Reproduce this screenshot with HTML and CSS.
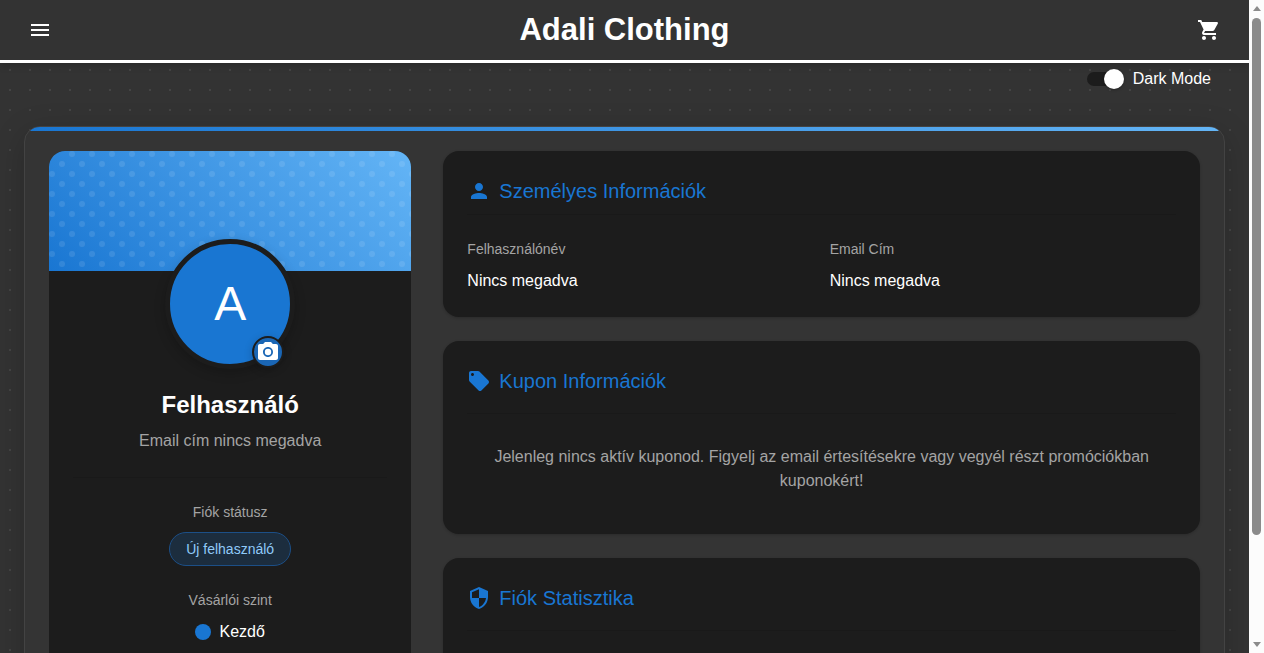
FILE: index.html
```html
<!DOCTYPE html>
<html lang="hu">
<head>
<meta charset="utf-8">
<meta name="viewport" content="width=device-width, initial-scale=1">
<title>Adali Clothing</title>
<link rel="stylesheet" href="styles.css">
</head>
<body>
<div class="viewport">
  <div class="page">
    <header class="header">
      <button class="icon-button" type="button" aria-label="Menü">
        <svg class="icon" viewBox="0 0 24 24"><path d="M3 18h18v-2H3v2zm0-5h18v-2H3v2zm0-7v2h18V6H3z"/></svg>
      </button>
      <h1 class="brand">Adali Clothing</h1>
      <button class="icon-button" type="button" aria-label="Kosár">
        <svg class="icon" viewBox="0 0 24 24"><path d="M15.55 13c.75 0 1.41-.41 1.75-1.03l3.58-6.49c.37-.66-.11-1.48-.87-1.48H5.21l-.94-2H1v2h2l3.6 7.59-1.35 2.44C4.52 15.37 5.48 17 7 17h12v-2H7l1.1-2h7.45zM7 18c-1.1 0-1.99.9-1.99 2S5.9 22 7 22s2-.9 2-2-.9-2-2-2zm10 0c-1.1 0-1.99.9-1.99 2s.89 2 1.99 2 2-.9 2-2-.9-2-2-2z"/></svg>
      </button>
    </header>

    <div class="mode-row">
      <label class="mode"><input class="switch" type="checkbox" role="switch" checked>Dark Mode</label>
    </div>

    <main class="panel">
      <aside class="profile">
        <div class="banner">
          <svg class="banner-dots" aria-hidden="true">
            <defs><pattern id="dots" width="20" height="20" patternUnits="userSpaceOnUse"><circle cx="3" cy="3" r="3"/><circle cx="13" cy="13" r="3"/></pattern></defs>
            <rect width="100%" height="100%" fill="url(#dots)"/>
          </svg>
        </div>
        <div class="avatar">A
          <button class="avatar-edit" type="button" aria-label="Kép módosítása">
            <svg class="icon" viewBox="0 0 24 24"><circle cx="12" cy="12" r="3.2"/><path d="M9 2 7.17 4H4c-1.1 0-2 .9-2 2v12c0 1.100.9 2 2 2h16c1.100 0 2-.9 2-2V6c0-1.100-.9-2-2-2h-3.170L15 2H9zm3 15c-2.760 0-5-2.240-5-5s2.240-5 5-5 5 2.240 5 5-2.240 5-5 5z"/></svg>
          </button>
        </div>
        <h2 class="name">Felhasználó</h2>
        <p class="email">Email cím nincs megadva</p>
        <div class="facts">
          <div class="fact">
            <span class="label">Fiók státusz</span>
            <span class="chip">Új felhasználó</span>
          </div>
          <div class="fact">
            <span class="label">Vásárlói szint</span>
            <span class="level">Kezdő</span>
          </div>
        </div>
      </aside>

      <div class="sections">
        <section class="card">
          <h2 class="card-title card-title-compact"><svg class="icon" viewBox="0 0 24 24"><path d="M12 12c2.210 0 4-1.790 4-4s-1.790-4-4-4-4 1.790-4 4 1.790 4 4 4zm0 2c-2.670 0-8 1.340-8 4v2h16v-2c0-2.660-5.330-4-8-4z"/></svg>Személyes Információk</h2>
          <dl class="fields">
            <div class="field"><dt class="label">Felhasználónév</dt><dd class="value">Nincs megadva</dd></div>
            <div class="field"><dt class="label">Email Cím</dt><dd class="value">Nincs megadva</dd></div>
          </dl>
        </section>
        <section class="card">
          <h2 class="card-title"><svg class="icon" viewBox="0 0 24 24"><path d="m21.410 11.580-9-9C12.050 2.220 11.550 2 11 2H4c-1.100 0-2 .9-2 2v7c0 .55.220 1.050.590 1.420l9 9c.360.360.860.580 1.410.580s1.050-.220 1.410-.590l7-7c.370-.360.590-.860.590-1.410s-.230-1.060-.590-1.420zM5.500 7C4.670 7 4 6.330 4 5.500S4.670 4 5.500 4 7 4.670 7 5.500 6.330 7 5.500 7z"/></svg>Kupon Információk</h2>
          <p class="empty">Jelenleg nincs aktív kuponod. Figyelj az email értesítésekre vagy vegyél részt promóciókban kuponokért!</p>
        </section>
        <section class="card">
          <h2 class="card-title"><svg class="icon" viewBox="0 0 24 24"><path d="M12 1 3 5v6c0 5.550 3.840 10.740 9 12 5.160-1.260 9-6.450 9-12V5l-9-4zm0 10.990h7c-.530 4.120-3.280 7.790-7 8.940V12H5V6.300l7-3.110v8.800z"/></svg>Fiók Statisztika</h2>
        </section>
      </div>
    </main>
  </div>

  <div class="scrollbar" aria-hidden="true">
    <span class="arrow arrow-up"></span>
    <span class="track"><span class="thumb"></span></span>
    <span class="arrow arrow-down"></span>
  </div>
</div>
</body>
</html>
```
FILE: styles.css
```css
* { box-sizing: border-box; }

body {
  margin: 0;
  background: #333;
  color: #fff;
  font: 16px/24px "Liberation Sans", Arial, sans-serif;
}

h1, h2, p, dl, dd { margin: 0; }

button {
  border: 0;
  padding: 0;
  background: none;
  color: inherit;
  cursor: pointer;
}

.icon {
  display: block;
  flex: none;
  width: 24px;
  height: 24px;
  fill: currentColor;
}

.viewport {
  display: flex;
  height: 100vh;
  overflow: hidden;
}

.page {
  flex: 1;
  min-width: 0;
  overflow: hidden;
  background: radial-gradient(#444 1px, transparent 1px) 0 0 / 20px 20px #333;
}

.header {
  display: flex;
  align-items: center;
  justify-content: space-between;
  height: 63px;
  padding: 0 20px;
  border-bottom: 3px solid #fff;
  background: #333;
  box-shadow: 0 2px 8px rgba(0, 0, 0, 0.2);
}

.icon-button { padding: 8px; }

.brand {
  font-size: 31px;
  line-height: 40px;
}

.mode-row {
  display: flex;
  justify-content: flex-end;
  height: 63px;
  padding: 4px 38px 0 0;
}

.mode {
  display: flex;
  align-items: center;
  gap: 12px;
  height: 24px;
  cursor: pointer;
}

.switch {
  appearance: none;
  display: flex;
  align-items: center;
  justify-content: flex-end;
  width: 34px;
  height: 14px;
  margin: 0;
  border-radius: 7px;
  background: #1c1c1c;
}

.switch::before {
  content: "";
  flex: none;
  width: 20px;
  height: 20px;
  margin-right: -3px;
  border-radius: 50%;
  background: #fff;
  box-shadow: 0 1px 3px rgba(0, 0, 0, 0.3);
}

.switch:not(:checked) { justify-content: flex-start; }

.panel {
  position: relative;
  display: grid;
  grid-template-columns: repeat(12, 1fr);
  gap: 32px;
  margin: 0 24px;
  padding: 24px;
  border: 1px solid #434343;
  border-radius: 16px;
  overflow: hidden;
  background: #343434;
  box-shadow: 0 8px 32px rgba(0, 0, 0, 0.2);
}

.panel::before {
  content: "";
  position: absolute;
  inset: 0 0 auto;
  height: 4px;
  background: linear-gradient(90deg, #1976d2, #64b5f6);
}

.profile {
  grid-column: span 4;
  display: flex;
  flex-direction: column;
  align-items: center;
  min-height: 640px;
  border-radius: 16px;
  overflow: hidden;
  background: #1c1c1c;
  text-align: center;
}

.banner {
  align-self: stretch;
  height: 120px;
  background: linear-gradient(45deg, #1976d2, #64b5f6);
}

.banner-dots {
  display: block;
  width: 100%;
  height: 100%;
  fill: rgba(255, 255, 255, 0.1);
}

.avatar {
  position: relative;
  width: 130px;
  height: 130px;
  margin-top: -32px;
  border: 5px solid #1c1c1c;
  border-radius: 50%;
  background: #1976d2;
  box-shadow: 0 4px 12px rgba(0, 0, 0, 0.2);
  font-size: 48px;
  line-height: 120px;
}

.avatar-edit {
  position: absolute;
  right: 6px;
  bottom: -4px;
  width: 32px;
  height: 32px;
  padding: 2px;
  border: 2px solid #1c1c1c;
  border-radius: 50%;
  background: #1a66b5;
  box-shadow: 0 2px 8px rgba(0, 0, 0, 0.2);
}

.name {
  margin-top: 20px;
  font-size: 24px;
  line-height: 32px;
}

.email {
  margin-top: 8px;
  color: #a4a4a4;
}

.facts {
  display: flex;
  flex-direction: column;
  align-self: stretch;
  gap: 24px;
  margin: 24px 24px 0;
  padding-top: 24px;
  border-top: 1px solid #191919;
}

.fact {
  display: flex;
  flex-direction: column;
  align-items: center;
  gap: 10px;
}

.label {
  color: #a4a4a4;
  font-size: 14px;
  line-height: 20px;
}

.chip {
  padding: 6px 16px;
  border: 1px solid #1c4f87;
  border-radius: 17px;
  background: #1c2d3e;
  color: #90caf9;
  font-size: 14px;
  line-height: 20px;
}

.level {
  display: flex;
  align-items: center;
  gap: 8px;
}

.level::before {
  content: "";
  width: 16px;
  height: 16px;
  border-radius: 50%;
  background: #1976d2;
}

.sections {
  grid-column: span 8;
  display: flex;
  flex-direction: column;
  gap: 24px;
}

.card {
  padding: 24px;
  border-radius: 16px;
  background: #1c1c1c;
  box-shadow: 0 1px 3px rgba(0, 0, 0, 0.2);
}

.card:last-child { min-height: 240px; }

.card-title {
  display: flex;
  align-items: center;
  gap: 8px;
  padding-bottom: 16px;
  border-bottom: 1px solid #191919;
  color: #1976d2;
  font-size: 20px;
  font-weight: 400;
  line-height: 32px;
}

.card-title-compact { padding-bottom: 7px; }

.fields {
  display: grid;
  grid-template-columns: 1fr 1fr;
  gap: 16px;
  padding-top: 24px;
}

.field {
  display: grid;
  gap: 10px;
}

.empty {
  padding: 31px 16px 17px;
  color: #a4a4a4;
  text-align: center;
}

.scrollbar {
  display: flex;
  flex-direction: column;
  align-items: center;
  justify-content: space-between;
  width: 15px;
  padding: 6px 0;
  background: #fcfcfc;
}

.arrow {
  border: 4px solid transparent;
}

.arrow-up {
  border-top: 0;
  border-bottom: 5px solid #8b8b8b;
}

.arrow-down {
  border-bottom: 0;
  border-top: 5px solid #8b8b8b;
}

.track {
  flex: 1;
  width: 9px;
  padding: 7px 0 9px;
}

.thumb {
  display: block;
  height: 84%;
  border-radius: 5px;
  background: #8b8b8b;
}
```
